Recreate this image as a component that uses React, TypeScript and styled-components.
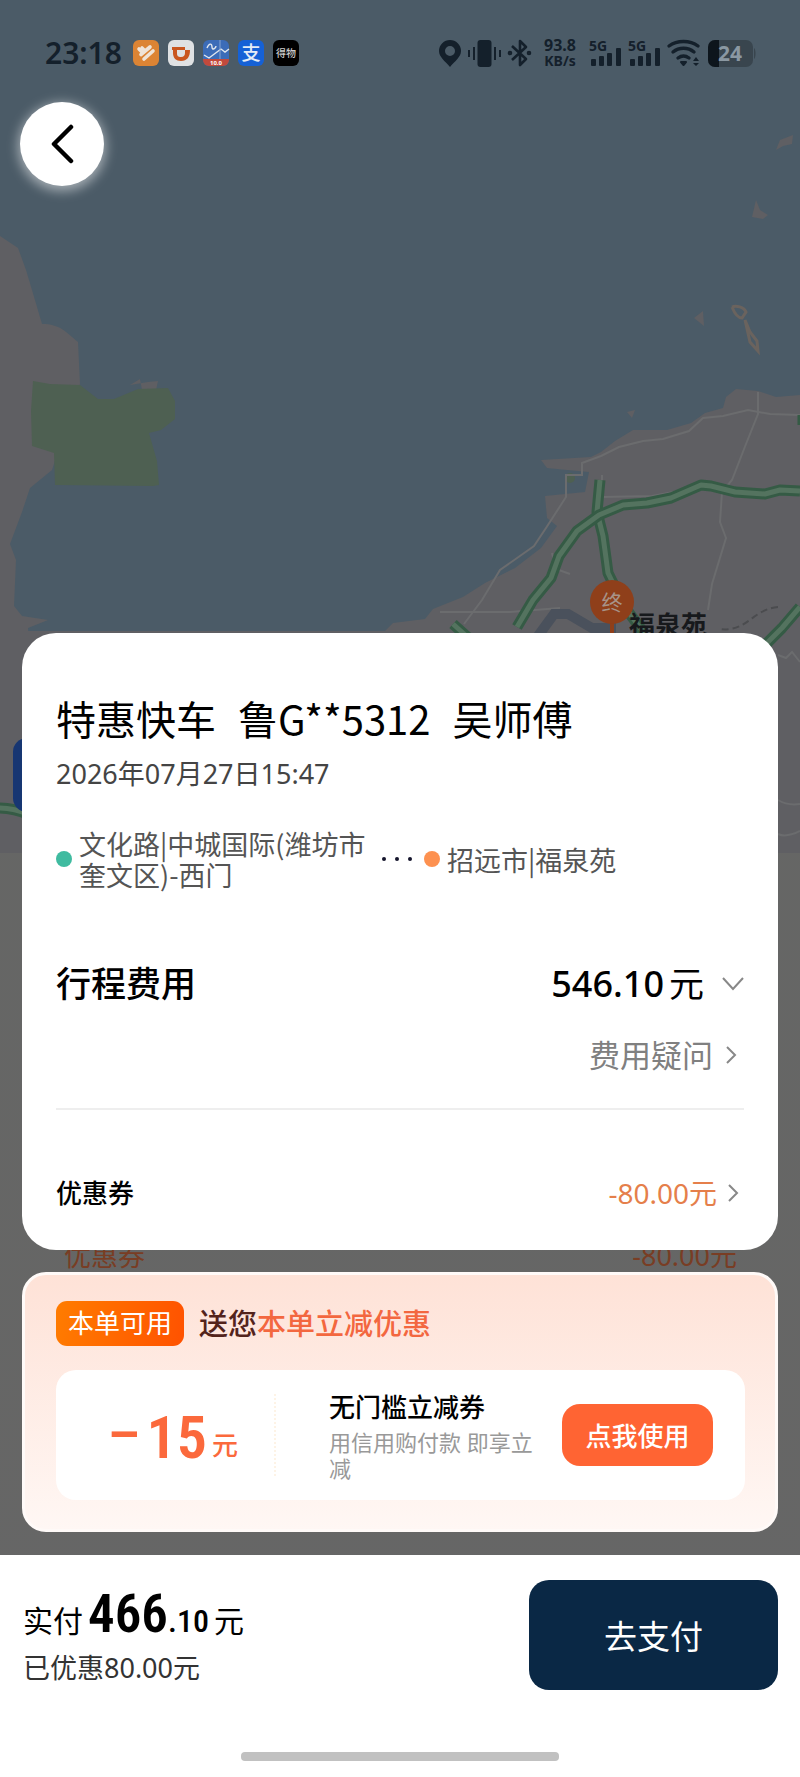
import React from 'react'
import styled, { createGlobalStyle } from 'styled-components'

const GlobalStyle = createGlobalStyle`
  * {
    box-sizing: border-box;
  }
  body {
    margin: 0;
    background: #666;
    color: #000;
    font-family: 'Noto Sans', 'Noto Sans CJK SC', sans-serif;
  }
  button {
    border: 0;
    padding: 0;
    background: none;
    font-family: inherit;
    color: inherit;
    cursor: pointer;
  }
  a {
    color: inherit;
    text-decoration: none;
  }
  h1, h2, h3, p {
    margin: 0;
    font-weight: 400;
  }
`

const cjk = `'Noto Sans CJK SC', sans-serif`
const narrow = `'Roboto Condensed', Roboto, sans-serif`

const Page = styled.div`
  position: relative;
  display: flex;
  flex-direction: column;
  min-height: 100vh;
  background: linear-gradient(#656664, #666);
`
const MapLayer = styled.div`
  position: absolute;
  top: 0;
  left: 0;
  width: 100%;
  svg {
    display: block;
    width: 100%;
    height: auto;
  }
`
const Top = styled.header`
  position: relative;
  padding: 38px 20px 60px;
`
const StatusBar = styled.div`
  display: flex;
  align-items: center;
  justify-content: space-between;
  height: 30px;
  padding: 0 24px 0 25px;
  color: #14202b;
`
const StatusGroup = styled.div<{ $gap: number }>`
  display: flex;
  align-items: center;
  column-gap: ${({ $gap }) => $gap}px;
  svg {
    display: block;
    flex: none;
    overflow: visible;
  }
`
const Clock = styled.span`
  font-size: 30px;
  line-height: 30px;
  font-weight: 600;
  margin-right: 2px;
`
const Speed = styled.span`
  display: flex;
  flex-direction: column;
  align-items: center;
  padding: 0 6px;
  font-size: 16px;
  line-height: 16px;
  font-weight: 700;
  small {
    font-size: 14px;
  }
`
const BackButton = styled.button`
  display: flex;
  align-items: center;
  justify-content: center;
  width: 84px;
  height: 84px;
  margin-top: 34px;
  border-radius: 50%;
  background: #fff;
  box-shadow: 0 3px 12px 2px rgba(255, 255, 255, 0.5);
`
const Content = styled.main`
  position: relative;
  margin-top: auto;
  padding: 0 22px 23px;
`
const TripCard = styled.section`
  padding: 58px 34px 36px;
  border-radius: 34px;
  background: #fff;
`
const TripTitle = styled.h1`
  display: flex;
  flex-wrap: wrap;
  column-gap: 22px;
  font-family: ${cjk};
  font-size: 40px;
  line-height: 54px;
`
const TripTime = styled.p`
  margin-top: 10px;
  font-size: 27px;
  line-height: 38px;
  color: #444;
`
const Route = styled.div`
  display: flex;
  align-items: center;
  margin-top: 35px;
  font-family: ${cjk};
  font-size: 27px;
  line-height: 31px;
  color: #555;
`
const Place = styled.span<{ $color: string; $width?: number }>`
  display: flex;
  align-items: center;
  column-gap: 7px;
  max-width: ${({ $width }) => ($width ? `${$width}px` : 'none')};
  &::before {
    content: '';
    flex: none;
    width: 16px;
    height: 16px;
    border-radius: 50%;
    background: ${({ $color }) => $color};
  }
`
const Dots = styled.span`
  display: flex;
  column-gap: 9px;
  margin: 0 12px;
  i {
    width: 4px;
    height: 4px;
    border-radius: 50%;
    background: #14142b;
  }
`
const Row = styled.div<{ $top: number }>`
  display: flex;
  align-items: center;
  justify-content: space-between;
  margin-top: ${({ $top }) => $top}px;
`
const FeeTitle = styled.h2`
  font-size: 35px;
  line-height: 48px;
  font-weight: 500;
`
const FeeButton = styled.button`
  display: flex;
  align-items: center;
  font-size: 36px;
  line-height: 48px;
  font-weight: 500;
  svg {
    margin-left: 18px;
  }
`
const Unit = styled.span<{ $size: number }>`
  margin-left: 5px;
  font-size: ${({ $size }) => $size}px;
  font-weight: 400;
`
const FeeLink = styled.a`
  display: flex;
  align-items: center;
  column-gap: 13px;
  margin-left: auto;
  padding-right: 7px;
  font-size: 31px;
  line-height: 42px;
  color: #808080;
`
const Divider = styled.hr`
  height: 2px;
  margin: 32px 0 0;
  border: 0;
  background: #eee;
`
const CouponTitle = styled.h2`
  font-size: 26px;
  line-height: 42px;
  font-weight: 500;
`
const CouponLink = styled.a`
  display: flex;
  align-items: center;
  column-gap: 11px;
  padding-right: 5px;
  font-size: 28px;
  line-height: 42px;
  color: #e57f4b;
`
const Peek = styled.div`
  display: flex;
  align-items: flex-end;
  justify-content: space-between;
  height: 22px;
  padding: 0 41px 0 42px;
  overflow: hidden;
  font-size: 27px;
  line-height: 32px;
  color: #793d24;
`
const Promo = styled.section`
  padding: 26px 30px 29px 31px;
  border: 3px solid #fffaf8;
  border-radius: 24px;
  background: linear-gradient(#fee2d7, #fff7f4);
`
const PromoHead = styled.div`
  display: flex;
  align-items: center;
  column-gap: 15px;
`
const Badge = styled.span`
  padding: 0 12px;
  border-radius: 11px;
  background: linear-gradient(100deg, #ff7c00, #ff5200);
  font-size: 26px;
  line-height: 45px;
  color: #fff;
`
const PromoTitle = styled.h3`
  font-size: 29px;
  line-height: 45px;
  font-weight: 500;
  color: #53231b;
  em {
    font-style: normal;
    color: #f3673f;
  }
`
const Ticket = styled.div`
  display: flex;
  align-items: center;
  height: 130px;
  margin-top: 24px;
  padding-right: 32px;
  border-radius: 20px;
  background: #fff;
`
const TicketAmount = styled.div`
  display: flex;
  align-items: center;
  width: 220px;
  height: 82px;
  padding-left: 52px;
  border-right: 2px dotted #fdf3e6;
  color: #fb693c;
`
const Minus = styled.span`
  margin-right: 7px;
  font: 700 50px/60px Roboto, sans-serif;
`
const TicketNumber = styled.strong`
  padding-top: 6px;
  font: 600 60px/70px ${narrow};
`
const TicketUnit = styled.span`
  margin: 20px 0 0 5px;
  font-size: 26px;
  line-height: 32px;
  font-weight: 500;
`
const TicketInfo = styled.div`
  flex: 1;
  padding-left: 53px;
`
const TicketTitle = styled.h3`
  font-size: 26px;
  line-height: 36px;
  font-weight: 500;
`
const TicketNote = styled.p`
  margin-top: 4px;
  font-size: 22px;
  line-height: 26px;
  color: #999;
`
const UseButton = styled.button`
  flex: none;
  width: 151px;
  height: 62px;
  margin-left: 22px;
  border-radius: 18px;
  background: #ff6433;
  font-size: 26px;
  font-weight: 500;
  color: #fff;
`
const Footer = styled.footer`
  position: relative;
  padding: 25px 22px 16px;
  background: #fff;
`
const PayRow = styled.div`
  display: flex;
  align-items: flex-start;
  justify-content: space-between;
`
const Total = styled.p`
  display: flex;
  align-items: baseline;
  height: 69px;
  padding-left: 1px;
  font-size: 30px;
  line-height: 68px;
  strong {
    margin-left: 5px;
    font: 600 53px/68px ${narrow};
  }
  b {
    font: 500 32px/68px ${narrow};
  }
`
const Saved = styled.p`
  padding-left: 1px;
  font-size: 27px;
  line-height: 38px;
  color: #333;
`
const PayButton = styled.button`
  width: 249px;
  height: 110px;
  border-radius: 20px;
  background: #0a2845;
  font-size: 33px;
  color: #fff;
`
const HomeBar = styled.div`
  width: 42%;
  height: 9px;
  margin: 62px auto 0;
  border-radius: 4px;
  background: #c1c1c1;
`

function Chevron({ down = false }: { down?: boolean }) {
  return down ? (
    <svg width="22" height="14" viewBox="0 0 22 14" fill="none" stroke="#888" strokeWidth="2">
      <path d="M1 1l10 11L21 1" />
    </svg>
  ) : (
    <svg width="11" height="18" viewBox="0 0 11 18" fill="none" stroke="#888" strokeWidth="2">
      <path d="M1 1l8 8-8 8" />
    </svg>
  )
}

function Signal() {
  return (
    <svg width="32" height="28" viewBox="0 0 32 28" fill="#14202b">
      <text x="0" y="12" fontSize="14" fontWeight="700">5G</text>
      <rect x="2" y="20" width="5" height="7" rx="1" />
      <rect x="10" y="17" width="5" height="10" rx="1" />
      <rect x="18" y="14" width="5" height="13" rx="1" />
      <rect x="27" y="9" width="5" height="18" rx="1" />
    </svg>
  )
}

function AppIcons() {
  return (
    <>
      <svg width="26" height="26" viewBox="0 0 26 26">
        <rect width="26" height="26" rx="6" fill="#dc8434" />
        <g fill="none" stroke="#efe4d8" strokeWidth="3.600" strokeLinecap="round">
          <path d="M6 9l3 3M9 8l2 2" />
          <path d="M8 14.500l9-7.500" />
          <path d="M11 19l9-8" />
        </g>
      </svg>
      <svg width="26" height="26" viewBox="0 0 26 26">
        <rect width="26" height="26" rx="6" fill="#dfe1e3" />
        <path
          fillRule="evenodd"
          fill="#c9561f"
          d="M4 7h13v3h5c0 7-3 11-9 11-5 0-8-3-8-8v-3H4zM9 10v3c0 3 1 4 4 4s4-2 4-4v-3z"
        />
      </svg>
      <svg width="26" height="26" viewBox="0 0 26 26">
        <rect width="26" height="26" rx="6" fill="#3c6cb8" />
        <path d="M0 19h26v1a6 6 0 0 1-6 6H6a6 6 0 0 1-6-6z" fill="#c24a3c" />
        <path d="M1 15l5 3 8-6 4-3 4 3 4-3M4 8c2-5 5-5 5-1s4 1 4-1" fill="none" stroke="#e1e7ee" strokeWidth="1.4" />
        <path d="M17 0v19" stroke="#88a6d2" />
        <text x="13" y="25" fontSize="6" fontWeight="700" fill="#fff" textAnchor="middle">10.0</text>
      </svg>
      <svg width="26" height="26" viewBox="0 0 26 26">
        <rect width="26" height="26" rx="6" fill="#1561d6" />
        <text x="13" y="20" fontSize="19" fontWeight="500" fill="#e4ecf6" textAnchor="middle">支</text>
      </svg>
      <svg width="26" height="26" viewBox="0 0 26 26">
        <rect width="26" height="26" rx="6" fill="#000" />
        <text x="13" y="17" fontSize="10" fontWeight="500" fill="#ccc" textAnchor="middle">得物</text>
      </svg>
    </>
  )
}

function StatusIcons() {
  return (
    <>
      <svg width="22" height="28" viewBox="0 0 22 28">
        <path
          fillRule="evenodd"
          fill="#14202b"
          d="M11 1a11 11 0 0 1 11 11c0 6-6 10-11 16C6 22 0 18 0 12A11 11 0 0 1 11 1zm0 6a5 5 0 1 0 0 10 5 5 0 0 0 0-10z"
        />
      </svg>
      <svg width="33" height="28" viewBox="0 0 33 28" fill="#14202b">
        <rect x="9.500" y="1" width="14" height="27" rx="3" />
        <path d="M5 8h2v13H5zM0 11h2v7H0zM26 8h2v13h-2zM31 11h2v7h-2z" />
      </svg>
      <svg width="23" height="28" viewBox="0 0 23 28" fill="none" stroke="#14202b" strokeWidth="2.600" strokeLinejoin="round">
        <path d="M4 7l14 13-6 6V2l6 6L4 21" />
        <circle cx="2" cy="14" r="1" />
        <circle cx="21" cy="14" r="1" />
      </svg>
      <Speed>
        <span>93.8</span>
        <small>KB/s</small>
      </Speed>
      <Signal />
      <Signal />
      <svg width="34" height="28" viewBox="0 0 34 28" fill="none" stroke="#14202b" strokeWidth="3.400" strokeLinecap="round">
        <path d="M2 7c8-6 21-6 29 0M6 13c6-5 15-5 21 0M11 19c4-3 7-3 11 0" />
        <path d="M14 23h5l-2.500 3z" fill="#14202b" strokeWidth="2" strokeLinejoin="round" />
        <path d="M29 18l3 4h-6zM29 27l3-3h-6z" fill="#14202b" stroke="none" />
      </svg>
      <svg width="48" height="28" viewBox="0 0 48 28">
        <rect x="0" y="1" width="45" height="27" rx="7" fill="#39454e" />
        <path d="M46 9c2 1 2 10 0 11z" fill="#39454e" />
        <path d="M11 1v27H7a7 7 0 0 1-7-7V8a7 7 0 0 1 7-7z" fill="#0d151c" />
        <text x="22" y="22" fontSize="21" fontWeight="700" fill="#8b98a2" textAnchor="middle">24</text>
      </svg>
    </>
  )
}

const highways = [
  'M600 480L597 512l6 24 3 22 2 15 16 33 20 27',
  'M800 491l-20-1-15 4-30-2-24-6-10-1-30 13-24 5-24 2-24 10-22 16-18 25-8 22-18 22-16 27',
  'M453 624l20 18',
  'M800 607l-18 21-22 22',
  'M0 808q14 0 30 7',
]

function TripMap() {
  return (
    <svg viewBox="0 0 800 853">
      <rect width="800" height="853" fill="#4b5b67" />
      <g fill="#5f5f63">
        <path d="M0 236l18 12 8 22 6 20 10 34c18 0 24 8 36 18l2 42-28 86-22 18-8 24-12 32 6 16-2 46 8 10 26 4-20 8 10 130V853H0z" />
        <path d="M800 395l-24 2-18-6-22-2-10 8-3 11-18 5-14 10-24 7h-34l-18 11-14 11-10 5-50 3 6 8 20 2 22 2-4 20-40 4 2 22 10 8-16 22-26 20-30 15-22 14-30 12-8 10-32 4-8 8H22V853H800z" />
        <path d="M694 318l9-7 1 15zM752 217l4-17 4 10 8 5-5 4zM776 150l4-10 13-5-1 9-9 2zM627 412l8-2-3 8zM130 385l10-6 2 11h14l2-9-10 1z" />
      </g>
      <path d="M732 307c4-2 12 0 14 5l-4 6c-5 0-8-6-10-11M745 320l5 12 7 9 1 10-8-9z" fill="none" stroke="#6a635e" strokeWidth="3" />
      <path d="M33 381l17 3 30 1 18 14h16l24-10 30-1 7 13v18l-14 11-12 3 8 28 2 24-6 1-98-1-1-32-22-7-1-35z" fill="#4e6052" />
      <circle cx="570" cy="478" r="5" fill="#4e6052" />
      <g fill="none" stroke="#6b6c6e" strokeWidth="2">
        <path d="M800 415l-30-1-22-4-25 6-20 2-14 13-26 8-20 2-24 6-18 9-19 7v12h-16v22l-20 31-12 18-34 24-18 30-18 24" />
        <path d="M602 475v22l50-1 38-7h44" />
        <path d="M758 392v22l-12 30-14 36-10 12-2 30 6 16-14 46-4 26" />
        <path d="M440 612h70l50-4M552 553l4 16 14 5" />
        <path d="M778 655l8 3 6-6 8 10M778 800q10 6 22 4M778 834q8 4 22-3" />
      </g>
      <path d="M778 607c-26 2-30 26-60 22" fill="none" stroke="#4b4c4f" strokeWidth="2" strokeDasharray="7 4" />
      <path d="M538 636l16-22h14l24 14h24" fill="none" stroke="#4a515c" strokeWidth="10" />
      {highways.map((d) => (
        <g key={d} fill="none" strokeLinejoin="round">
          <path d={d} stroke="#355b45" strokeWidth="11" />
          <path d={d} stroke="#54735f" strokeWidth="5" />
        </g>
      ))}
      <path d="M799 415v10" stroke="#355b45" strokeWidth="3" />
      <rect x="13" y="738" width="60" height="74" rx="14" fill="#173672" />
      <path d="M612 620v16" stroke="#8f3f1a" strokeWidth="4" />
      <circle cx="612" cy="602" r="22" fill="#8f3f1a" />
      <text x="612" y="610" fontSize="21" fill="#a79388" textAnchor="middle">终</text>
      <text x="629" y="635" fontSize="26" fontWeight="700" fill="#17191c">福泉苑</text>
    </svg>
  )
}

export default function App() {
  return (
    <Page>
      <GlobalStyle />
      <MapLayer>
        <TripMap />
      </MapLayer>
      <Top>
        <StatusBar>
          <StatusGroup $gap={9}>
            <Clock>23:18</Clock>
            <AppIcons />
          </StatusGroup>
          <StatusGroup $gap={7}>
            <StatusIcons />
          </StatusGroup>
        </StatusBar>
        <BackButton aria-label="返回">
          <svg width="26" height="40" viewBox="0 0 26 40" fill="none" stroke="#000" strokeWidth="4.500" strokeLinecap="round" strokeLinejoin="round">
            <path d="M22 3L5 20l17 17" />
          </svg>
        </BackButton>
      </Top>
      <Content>
        <TripCard>
          <TripTitle>
            <span>特惠快车</span>
            <span>鲁G**5312</span>
            <span>吴师傅</span>
          </TripTitle>
          <TripTime>2026年07月27日15:47</TripTime>
          <Route>
            <Place $color="#3fbba0" $width={314}>文化路|中城国际(潍坊市奎文区)-西门</Place>
            <Dots>
              <i />
              <i />
              <i />
            </Dots>
            <Place $color="#fd9150">招远市|福泉苑</Place>
          </Route>
          <Row $top={70}>
            <FeeTitle>行程费用</FeeTitle>
            <FeeButton>
              546.10<Unit $size={35}>元</Unit>
              <Chevron down />
            </FeeButton>
          </Row>
          <Row $top={26}>
            <FeeLink href="#fee">
              费用疑问
              <Chevron />
            </FeeLink>
          </Row>
          <Divider />
          <Row $top={62}>
            <CouponTitle>优惠券</CouponTitle>
            <CouponLink href="#coupon">
              -80.00元
              <Chevron />
            </CouponLink>
          </Row>
        </TripCard>
        <Peek>
          <span>优惠券</span>
          <span>-80.00元</span>
        </Peek>
        <Promo>
          <PromoHead>
            <Badge>本单可用</Badge>
            <PromoTitle>
              送您<em>本单立减优惠</em>
            </PromoTitle>
          </PromoHead>
          <Ticket>
            <TicketAmount>
              <Minus>–</Minus>
              <TicketNumber>15</TicketNumber>
              <TicketUnit>元</TicketUnit>
            </TicketAmount>
            <TicketInfo>
              <TicketTitle>无门槛立减券</TicketTitle>
              <TicketNote>用信用购付款 即享立减</TicketNote>
            </TicketInfo>
            <UseButton>点我使用</UseButton>
          </Ticket>
        </Promo>
      </Content>
      <Footer>
        <PayRow>
          <div>
            <Total>
              实付<strong>466</strong>
              <b>.10</b>
              <Unit $size={30}>元</Unit>
            </Total>
            <Saved>已优惠80.00元</Saved>
          </div>
          <PayButton>去支付</PayButton>
        </PayRow>
        <HomeBar />
      </Footer>
    </Page>
  )
}
